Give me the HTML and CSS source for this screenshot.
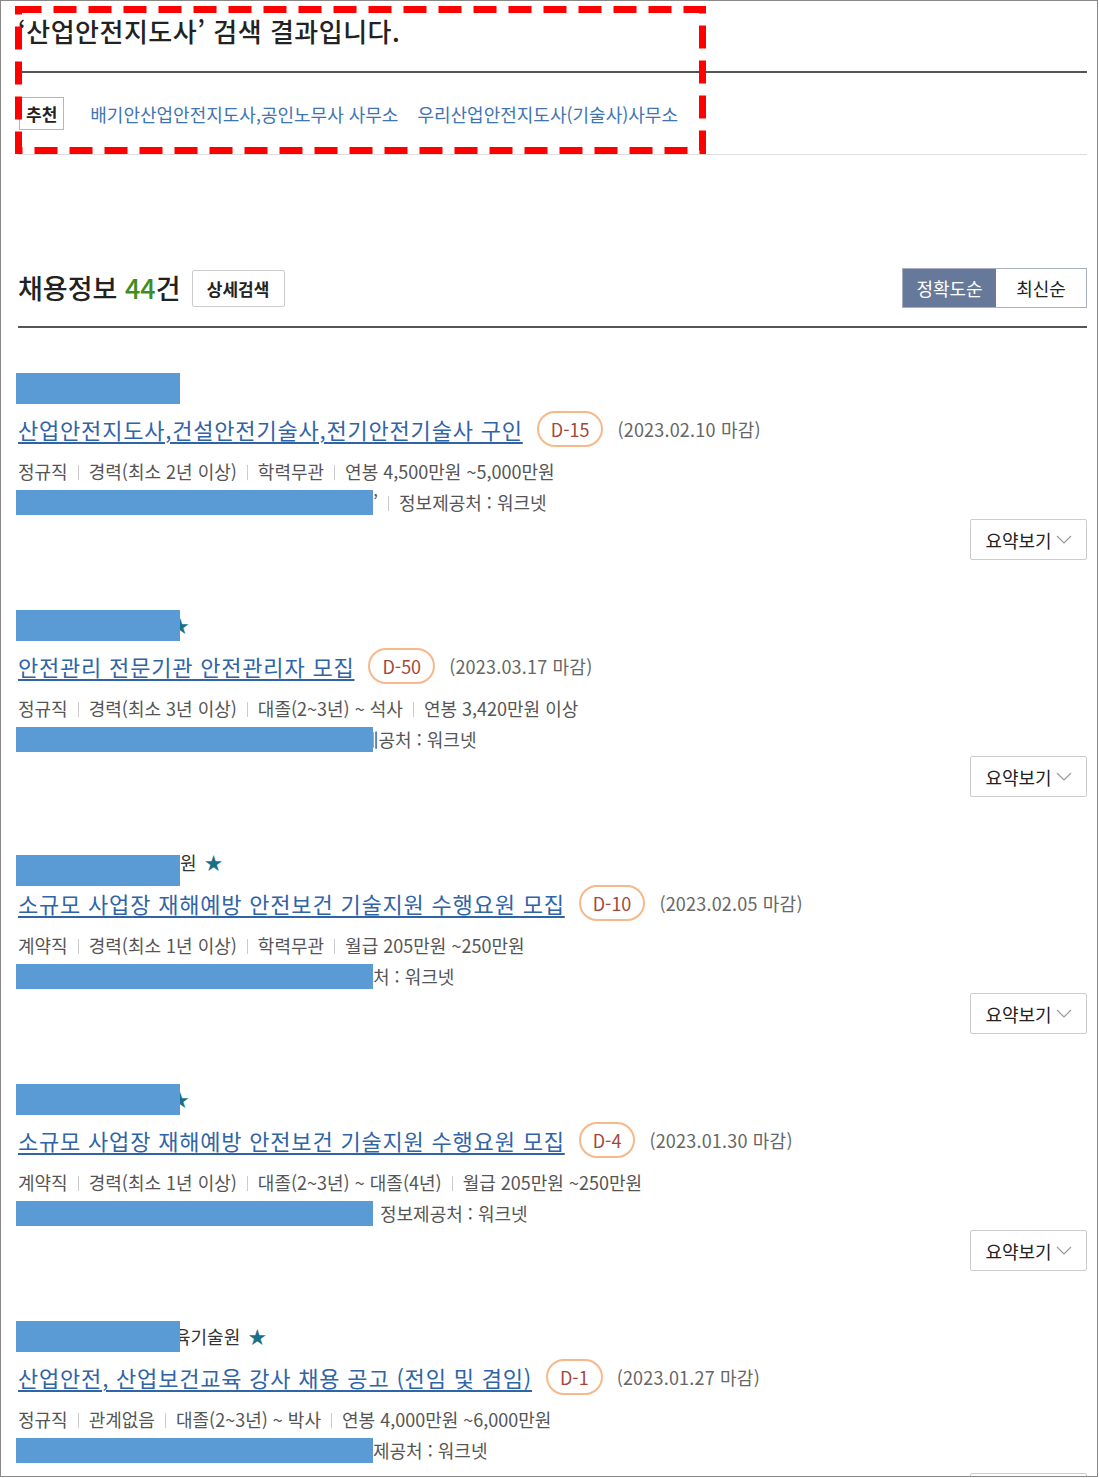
FILE: index.html
```html
<!DOCTYPE html>
<html lang="ko">
<head>
    <meta charset="UTF-8">
    <meta name="viewport" content="width=device-width, initial-scale=1.0">
    <title>채용정보 검색 결과</title>
    <link rel="stylesheet" href="styles.css">
</head>
<body>
<div class="frame">
    <!-- annotation box drawn over the search header -->
    <svg class="markup" width="691" height="148" viewBox="0 0 691 148">
        <rect x="3.5" y="3.5" width="684" height="141" fill="none" stroke="#ff0000" stroke-width="7" stroke-dasharray="23 12"/>
    </svg>

    <div class="search-head">
        <h1 class="search-title">‘산업안전지도사’ 검색 결과입니다.</h1>
    </div>

    <div class="related">
        <span class="related-label">추천</span>
        <a href="#" class="related-link">배기안산업안전지도사,공인노무사 사무소</a>
        <a href="#" class="related-link">우리산업안전지도사(기술사)사무소</a>
    </div>

    <div class="result-bar">
        <h2 class="result-count">채용정보 <em>44</em>건</h2>
        <button class="btn-detail">상세검색</button>
        <div class="sort">
            <button class="sort-btn active">정확도순</button>
            <button class="sort-btn">최신순</button>
        </div>
    </div>

    <ul class="job-list">
        <li class="job">
            <div class="job-company"><span class="redact redact-co"></span></div>
            <div class="job-title">
                <a href="#">산업안전지도사,건설안전기술사,전기안전기술사 구인</a>
                <span class="dday">D-15</span>
                <span class="deadline">(2023.02.10 마감)</span>
            </div>
            <div class="job-meta">정규직<i class="sep"></i>경력(최소 2년 이상)<i class="sep"></i>학력무관<i class="sep"></i>연봉 4,500만원 ~5,000만원</div>
            <div class="job-loc"><span class="redact redact-loc"></span><span class="loc-text">’<i class="sep"></i>정보제공처 : 워크넷</span></div>
            <div class="job-actions"><button class="btn-summary">요약보기<svg width="16" height="9" viewBox="0 0 16 9"><polyline points="1,1 8,8 15,1" fill="none" stroke="#999" stroke-width="1.2"/></svg></button></div>
        </li>
        <li class="job">
            <div class="job-company"><span class="redact redact-co"></span><span class="star star-cut">★</span></div>
            <div class="job-title">
                <a href="#">안전관리 전문기관 안전관리자 모집</a>
                <span class="dday">D-50</span>
                <span class="deadline">(2023.03.17 마감)</span>
            </div>
            <div class="job-meta">정규직<i class="sep"></i>경력(최소 3년 이상)<i class="sep"></i>대졸(2~3년) ~ 석사<i class="sep"></i>연봉 3,420만원 이상</div>
            <div class="job-loc"><span class="redact redact-loc"></span><span class="loc-text loc-cut">제공처 : 워크넷</span></div>
            <div class="job-actions"><button class="btn-summary">요약보기<svg width="16" height="9" viewBox="0 0 16 9"><polyline points="1,1 8,8 15,1" fill="none" stroke="#999" stroke-width="1.2"/></svg></button></div>
        </li>
        <li class="job">
            <div class="job-company"><span class="redact redact-co redact-low"></span><span class="co-name">원</span><span class="star">★</span></div>
            <div class="job-title">
                <a href="#">소규모 사업장 재해예방 안전보건 기술지원 수행요원 모집</a>
                <span class="dday">D-10</span>
                <span class="deadline">(2023.02.05 마감)</span>
            </div>
            <div class="job-meta">계약직<i class="sep"></i>경력(최소 1년 이상)<i class="sep"></i>학력무관<i class="sep"></i>월급 205만원 ~250만원</div>
            <div class="job-loc"><span class="redact redact-loc"></span><span class="loc-text">처 : 워크넷</span></div>
            <div class="job-actions"><button class="btn-summary">요약보기<svg width="16" height="9" viewBox="0 0 16 9"><polyline points="1,1 8,8 15,1" fill="none" stroke="#999" stroke-width="1.2"/></svg></button></div>
        </li>
        <li class="job">
            <div class="job-company"><span class="redact redact-co"></span><span class="star star-cut">★</span></div>
            <div class="job-title">
                <a href="#">소규모 사업장 재해예방 안전보건 기술지원 수행요원 모집</a>
                <span class="dday">D-4</span>
                <span class="deadline">(2023.01.30 마감)</span>
            </div>
            <div class="job-meta">계약직<i class="sep"></i>경력(최소 1년 이상)<i class="sep"></i>대졸(2~3년) ~ 대졸(4년)<i class="sep"></i>월급 205만원 ~250만원</div>
            <div class="job-loc"><span class="redact redact-loc"></span><span class="loc-text loc-gap">정보제공처 : 워크넷</span></div>
            <div class="job-actions"><button class="btn-summary">요약보기<svg width="16" height="9" viewBox="0 0 16 9"><polyline points="1,1 8,8 15,1" fill="none" stroke="#999" stroke-width="1.2"/></svg></button></div>
        </li>
        <li class="job">
            <div class="job-company"><span class="redact redact-co"></span><span class="co-name co-cut">육기술원</span><span class="star">★</span></div>
            <div class="job-title">
                <a href="#">산업안전, 산업보건교육 강사 채용 공고 (전임 및 겸임)</a>
                <span class="dday">D-1</span>
                <span class="deadline">(2023.01.27 마감)</span>
            </div>
            <div class="job-meta">정규직<i class="sep"></i>관계없음<i class="sep"></i>대졸(2~3년) ~ 박사<i class="sep"></i>연봉 4,000만원 ~6,000만원</div>
            <div class="job-loc"><span class="redact redact-loc"></span><span class="loc-text">제공처 : 워크넷</span></div>
            <div class="job-actions"><button class="btn-summary btn-clipped"></button></div>
        </li>
    </ul>
</div>
</body>
</html>
```

FILE: styles.css
```css
body {
    margin: 0;
    background: #fff;
    font-family: "Noto Sans CJK KR", "Noto Sans", sans-serif;
    color: #222;
}
.frame {
    position: relative;
    width: 1098px;
    height: 1477px;
    box-sizing: border-box;
    border: 1px solid #888;
    padding: 0 10px 0 17px;
    overflow: hidden;
}
.markup {
    position: absolute;
    left: 14px;
    top: 5px;
    z-index: 5;
}

/* search header */
.search-head {
    padding: 13px 0 23px;
    border-bottom: 2px solid #555;
}
.search-title {
    margin: 0;
    font-size: 26px;
    font-weight: 500;
    letter-spacing: 0.5px;
    line-height: 34px;
    color: #222;
}
.related {
    display: flex;
    align-items: center;
    padding: 24px 0 24px 1px;
    border-bottom: 1px solid #ddd;
}
.related-label {
    display: inline-block;
    height: 33px;
    line-height: 31px;
    padding: 0 6px;
    box-sizing: border-box;
    border: 1px solid #8fc3e3;
    font-size: 17px;
    font-weight: bold;
    color: #222;
}
.related-link {
    margin-left: 26px;
    font-size: 18px;
    color: #3f74b3;
    text-decoration: none;
}
.related-link + .related-link {
    margin-left: 19px;
}

/* result count + sort */
.result-bar {
    display: flex;
    align-items: center;
    padding: 113px 0 18px;
    border-bottom: 2px solid #555;
}
.result-count {
    margin: 0;
    font-size: 27px;
    font-weight: 500;
    line-height: 40px;
    color: #222;
}
.result-count em {
    font-style: normal;
    color: #3f8d1f;
}
.btn-detail {
    margin-left: 11px;
    width: 93px;
    height: 37px;
    background: #fff;
    border: 1px solid #ccc;
    border-radius: 2px;
    font-family: inherit;
    font-size: 17px;
    font-weight: bold;
    color: #222;
}
.sort {
    display: flex;
    margin-left: auto;
    border: 1px solid #a7afc0;
}
.sort-btn {
    height: 38px;
    width: 90px;
    background: #fff;
    border: 0;
    font-family: inherit;
    font-size: 18px;
    color: #222;
}
.sort-btn.active {
    width: 93px;
    background: #67799a;
    color: #fff;
}

/* job list */
.job-list {
    list-style: none;
    margin: 0;
    padding: 44px 0 0;
}
.job {
    padding-bottom: 49px;
}
.redact {
    display: inline-block;
    flex-shrink: 0;
    background: #5b9bd5;
    position: relative;
    z-index: 1;
}
.redact-co {
    width: 164px;
    height: 31px;
    margin-left: -2px;
}
.redact-low {
    top: 8px;
}
.redact-loc {
    width: 357px;
    height: 25px;
    margin-left: -2px;
}
.job-company {
    display: flex;
    align-items: center;
    height: 32px;
    font-size: 18px;
    color: #333;
}
.co-cut {
    margin-left: -6px;
}
.star {
    margin-left: 8px;
    color: #1c6f8a;
    font-size: 18px;
}
.star-cut {
    margin-left: -9px;
}
.job-title {
    display: flex;
    align-items: center;
    height: 38px;
    margin-top: 6px;
}
.job-title a {
    font-size: 22px;
    letter-spacing: 0.8px;
    color: #2f64a7;
    text-decoration: underline;
    text-underline-offset: 3px;
}
.dday {
    display: inline-block;
    height: 36px;
    line-height: 32px;
    margin-left: 14px;
    padding: 0 12px;
    box-sizing: border-box;
    border: 2px solid #f7b88a;
    border-radius: 18px;
    font-size: 18px;
    color: #a4473b;
}
.deadline {
    margin-left: 14px;
    font-size: 18px;
    letter-spacing: 0.2px;
    color: #666;
}
.job-meta {
    margin-top: 10px;
    line-height: 26px;
    font-size: 18px;
    color: #555;
}
.sep {
    display: inline-block;
    width: 1px;
    height: 15px;
    margin: 0 10px;
    background: #ccc;
    vertical-align: -1px;
}
.job-loc {
    display: flex;
    align-items: center;
    height: 26px;
    margin-top: 5px;
    font-size: 18px;
    color: #555;
}
.loc-text {
    white-space: nowrap;
}
.loc-cut {
    margin-left: -11px;
}
.loc-gap {
    margin-left: 7px;
}
.job-actions {
    display: flex;
    justify-content: flex-end;
    margin-top: 4px;
}
.btn-summary {
    display: flex;
    align-items: center;
    justify-content: center;
    gap: 4px;
    width: 117px;
    height: 41px;
    background: #fff;
    border: 1px solid #ccc;
    border-radius: 2px;
    font-family: inherit;
    font-size: 18px;
    color: #222;
}
.btn-clipped {
    margin-top: 6px;
}
```
